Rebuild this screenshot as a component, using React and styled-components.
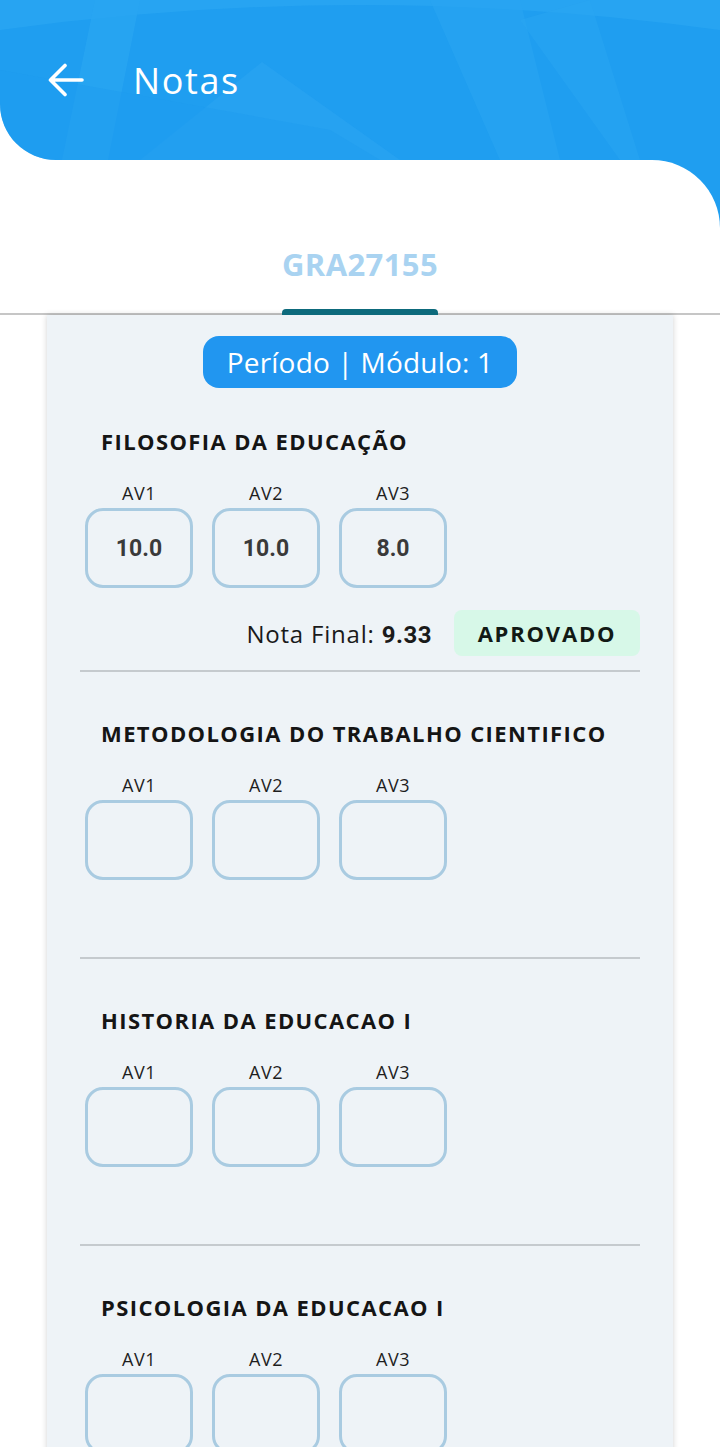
import React from "react";
import styled, { createGlobalStyle } from "styled-components";

const Global = createGlobalStyle`
  html, body { margin: 0; padding: 0; background: #ffffff; }
  body { font-family: "Open Sans", "Noto Sans", sans-serif; overflow: hidden; }
  * { box-sizing: border-box; }
`;

const BLUE = "#1f9ef0";

const Page = styled.div`
  width: 720px;
  height: 1447px;
  overflow: hidden;
  background: #ffffff;
`;

const TopBar = styled.header`
  position: relative;
  height: 160px;
  background: ${BLUE};
  border-bottom-left-radius: 56px;
  overflow: hidden;
  display: flex;
  align-items: center;
  padding: 0 0 0 48px;
  gap: 49px;
  z-index: 1;
`;

const Pattern = styled.svg`
  position: absolute;
  inset: 0;
  width: 100%;
  height: 100%;
  z-index: 0;
`;

const BackButton = styled.button`
  position: relative;
  z-index: 1;
  background: none;
  border: none;
  padding: 0;
  margin-top: -1px;
  width: 36px;
  height: 36px;
  display: flex;
  align-items: center;
  justify-content: center;
  cursor: pointer;
`;

const Title = styled.h1`
  position: relative;
  z-index: 1;
  margin: 0;
  color: #ffffff;
  font-family: "Open Sans", sans-serif;
  font-size: 36px;
  font-weight: 400;
  letter-spacing: 1.6px;
`;

const BodyWrap = styled.div`
  background: linear-gradient(${BLUE}, ${BLUE}) top right / 80px 80px no-repeat;
`;

const Body = styled.main`
  background: #ffffff;
  border-top-right-radius: 68px;
`;

const Tabs = styled.nav`
  height: 155px;
  display: flex;
  justify-content: center;
  align-items: flex-end;
  border-bottom: 2px solid #c6c6c6;
`;

const Tab = styled.div`
  position: relative;
  width: 156px;
  height: 84px;
  display: flex;
  justify-content: center;
  padding-top: 11px;
  color: #a9d3f1;
  font-family: "Open Sans", sans-serif;
  font-size: 31px;
  font-weight: 700;
  letter-spacing: 0.4px;
  line-height: 48px;
  &::after {
    content: "";
    position: absolute;
    left: 0;
    right: 0;
    bottom: -2px;
    height: 6px;
    border-radius: 4px 4px 0 0;
    background: #0d6a7c;
  }
`;

const Card = styled.section`
  margin: 0 47px;
  min-height: 1200px;
  background: #eef3f7;
  box-shadow: 0 0 6px rgba(0, 0, 0, 0.18);
  padding: 21px 33px 0;
  display: flex;
  flex-direction: column;
`;

const PeriodPill = styled.div`
  align-self: center;
  height: 52px;
  padding: 0 24px;
  border-radius: 16px;
  background: #2196f0;
  color: #ffffff;
  font-family: "Open Sans", sans-serif;
  font-size: 28px;
  letter-spacing: 0.2px;
  display: flex;
  align-items: center;
`;

const Subject = styled.div`
  display: flex;
  flex-direction: column;
  padding-top: ${(p) => p.$top}px;
  border-bottom: 2px solid #c5cace;
`;

const SubjectName = styled.h2`
  margin: 0 0 0 21px;
  font-family: "Open Sans", sans-serif;
  font-size: 22px;
  font-weight: 700;
  letter-spacing: 1.4px;
  color: #151515;
  line-height: 30px;
`;

const Grades = styled.div`
  display: flex;
  gap: 19px;
  margin: 26px 0 0 5px;
`;

const GradeCol = styled.div`
  display: flex;
  flex-direction: column;
  align-items: center;
  gap: 4px;
`;

const GradeLabel = styled.span`
  font-family: "Open Sans", sans-serif;
  font-size: 18px;
  color: #1e1e1e;
  line-height: 22px;
  letter-spacing: 0.5px;
`;

const GradeBox = styled.div`
  width: 108px;
  height: 80px;
  border: 3px solid #a9cbe1;
  border-radius: 18px;
  display: flex;
  align-items: center;
  justify-content: center;
  font-family: Roboto, "Liberation Sans", sans-serif;
  font-size: 23px;
  font-weight: 700;
  color: #3a3a3a;
`;

const FinalRow = styled.div`
  height: ${(p) => (p.$empty ? 41 : 46)}px;
  margin: 22px 0 14px;
  display: flex;
  justify-content: flex-end;
  align-items: center;
  gap: 22px;
`;

const FinalText = styled.span`
  font-family: "Open Sans", sans-serif;
  font-size: 24px;
  letter-spacing: 0.8px;
  color: #1a1a1a;
  b {
    font-family: Roboto, sans-serif;
    font-weight: 700;
    letter-spacing: 0.5px;
  }
`;

const StatusBadge = styled.span`
  width: 186px;
  height: 46px;
  border-radius: 8px;
  background: #d7f8e8;
  color: #121a15;
  font-family: "Open Sans", sans-serif;
  font-size: 22px;
  font-weight: 700;
  letter-spacing: 1.8px;
  display: flex;
  align-items: center;
  justify-content: center;
`;

const subjects = [
  { name: "FILOSOFIA DA EDUCAÇÃO", grades: ["10.0", "10.0", "8.0"], final: "9.33", status: "APROVADO" },
  { name: "METODOLOGIA DO TRABALHO CIENTIFICO", grades: ["", "", ""] },
  { name: "HISTORIA DA EDUCACAO I", grades: ["", "", ""] },
  { name: "PSICOLOGIA DA EDUCACAO I", grades: ["", "", ""] },
];

function ArrowLeft() {
  return (
    <svg width="36" height="36" viewBox="0 0 36 36" fill="none">
      <path d="M34 18H3M17 3.5L2.5 18L17 32.5" stroke="#fff" strokeWidth="3.6" strokeLinecap="round" strokeLinejoin="round" />
    </svg>
  );
}

export default function App() {
  return (
    <Page>
      <Global />
      <TopBar>
        <Pattern viewBox="0 0 720 160" preserveAspectRatio="none">
          <path d="M0 30 Q360 -20 720 30 L720 0 L0 0 Z" fill="#2ba6f2" opacity="0.7" />
          <polygon points="95,0 140,0 108,160 62,160" fill="#2aa5f2" opacity="0.75" />
          <polygon points="140,160 262,62 400,160" fill="#28a3f1" opacity="0.8" />
          <polygon points="430,0 520,0 560,160 500,160" fill="#2aa5f2" opacity="0.6" />
          <polygon points="520,20 590,0 640,160 620,160" fill="#2aa5f2" opacity="0.5" />
          <polygon points="0,70 330,130 380,160 0,160" fill="#1d9cef" opacity="0.5" />
        </Pattern>
        <BackButton aria-label="Voltar">
          <ArrowLeft />
        </BackButton>
        <Title>Notas</Title>
      </TopBar>
      <BodyWrap>
        <Body>
          <Tabs>
            <Tab>GRA27155</Tab>
          </Tabs>
          <Card>
            <PeriodPill>Período | Módulo: 1</PeriodPill>
            {subjects.map((s, i) => (
              <Subject key={s.name} $top={i === 0 ? 38 : 46}>
                <SubjectName>{s.name}</SubjectName>
                <Grades>
                  {s.grades.map((g, j) => (
                    <GradeCol key={j}>
                      <GradeLabel>AV{j + 1}</GradeLabel>
                      <GradeBox>{g}</GradeBox>
                    </GradeCol>
                  ))}
                </Grades>
                <FinalRow $empty={!s.final}>
                  {s.final && (
                    <>
                      <FinalText>
                        Nota Final: <b>{s.final}</b>
                      </FinalText>
                      <StatusBadge>{s.status}</StatusBadge>
                    </>
                  )}
                </FinalRow>
              </Subject>
            ))}
          </Card>
        </Body>
      </BodyWrap>
    </Page>
  );
}
